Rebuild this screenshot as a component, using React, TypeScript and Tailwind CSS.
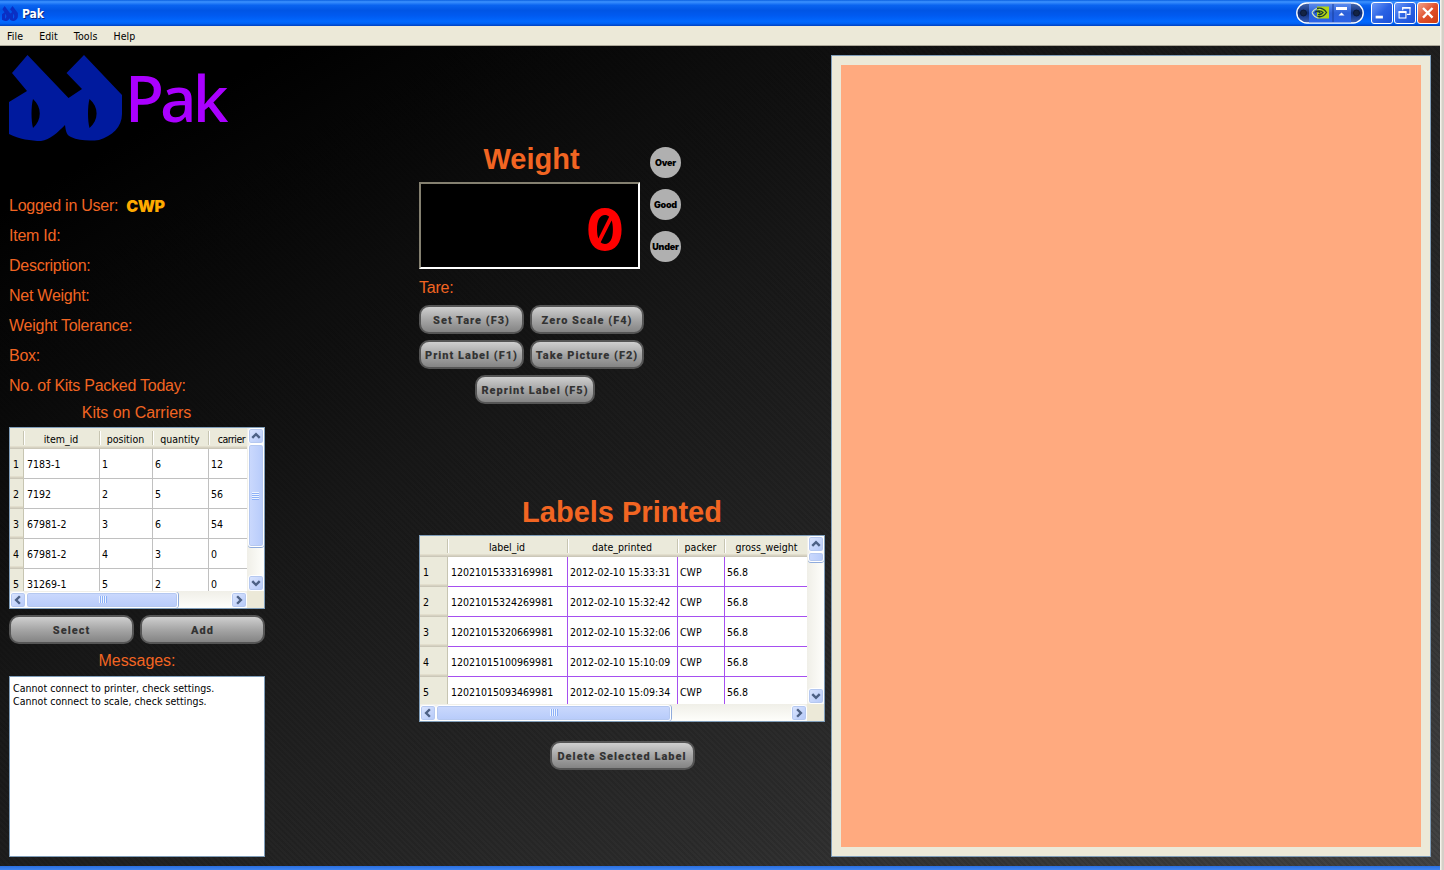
import React from "react";

const TAHOMA = "font-['DejaVu_Sans_Condensed','DejaVu_Sans',sans-serif] text-[10.5px]";

function Chevron({ dir }: { dir: "up" | "down" | "left" | "right" }) {
  const d = {
    up: "M3.5 9.5 L7.5 5.5 L11.5 9.5",
    down: "M3.5 5.5 L7.5 9.5 L11.5 5.5",
    left: "M9.5 3.5 L5.5 7.5 L9.5 11.5",
    right: "M5.5 3.5 L9.5 7.5 L5.5 11.5",
  }[dir];
  return (
    <div className="size-4 shrink-0 rounded-[3px] border border-white bg-linear-to-br from-[#dce6fe] to-[#b4c8f8] shadow-[inset_0_0_0_1px_#b5c8f0]">
      <svg viewBox="0 0 15 15" className="size-[14px]" fill="none" stroke="#4d6185" strokeWidth="2.6">
        <path d={d} />
      </svg>
    </div>
  );
}

function VScroll({ thumb, grip }: { thumb: string; grip?: boolean }) {
  return (
    <div className="flex w-[17px] shrink-0 flex-col bg-linear-to-r from-[#f0efe8] to-[#fefefb] pl-[0.5px]">
      <Chevron dir="up" />
      <div className="flex min-h-0 flex-1 flex-col">
        <div className={`${thumb} flex w-4 flex-col items-center justify-center gap-px rounded-[3px] border border-white bg-linear-to-r from-[#cbd9fd] to-[#b7cbfa] shadow-[inset_0_0_0_1px_#b5c8f0,0_1px_0_#8fabdc]`}>
          {grip && [0, 1, 2, 3].map((i) => <div key={i} className="h-px w-[7px] border-t border-[#eef4fe] shadow-[0_1px_0_#8cb0f8]" />)}
        </div>
      </div>
      <Chevron dir="down" />
    </div>
  );
}

function HScroll({ thumb }: { thumb: string }) {
  return (
    <div className="flex h-[17px] shrink-0 bg-linear-to-b from-[#f0efe8] to-[#fefefb] pt-[0.5px]">
      <Chevron dir="left" />
      <div className="flex min-w-0 flex-1">
        <div className={`${thumb} flex h-4 items-center justify-center gap-px rounded-[3px] border border-white bg-linear-to-b from-[#cbd9fd] to-[#b7cbfa] shadow-[inset_0_0_0_1px_#b5c8f0,1px_0_0_#8fabdc]`}>
          {[0, 1, 2, 3].map((i) => (
            <div key={i} className="h-[7px] w-px bg-[#eef4fe] shadow-[1px_0_0_#8cb0f8]" />
          ))}
        </div>
      </div>
      <Chevron dir="right" />
    </div>
  );
}

type TableProps = {
  cols: { name: string; w: string; tracking?: string }[];
  rows: string[][];
  headW: string;
  headPad: string;
  line: string;
  size: string;
  vThumb: string;
  hThumb: string;
  grip?: boolean;
};

function DataTable({ cols, rows, headW, headPad, line, size, vThumb, hThumb, grip }: TableProps) {
  return (
    <div className={`${size} ${TAHOMA} flex flex-col border border-[#7f9db9] bg-white text-black`}>
      <div className="flex min-h-0 flex-1">
        <div className="flex min-w-0 flex-1 flex-col overflow-hidden">
          <div className="flex h-[21px] shrink-0 border-b border-[#cbc7b8] bg-[#ebeadb] shadow-[inset_0_-1px_0_#d6d2c2,inset_0_-2px_0_#e2decd]">
            <div className={`${headW} my-[3px] shrink-0 border-r border-[#c7c5b2]`} />
            {cols.map((c) => (
              <div key={c.name} className={`${c.w} ${c.tracking ?? ""} my-[3px] flex shrink-0 items-center justify-center border-r border-l border-r-[#c7c5b2] border-l-white pt-[2px] pr-[2px] leading-none whitespace-nowrap last:border-r-0`}>
                <span>{c.name}</span>
              </div>
            ))}
          </div>
          {rows.map((r, i) => (
            <div key={i} className="flex h-[30px] shrink-0">
              <div className={`${headW} ${headPad} flex shrink-0 items-center border-b border-[#cbc7b8] bg-[#ebeadb] pt-[2px] shadow-[inset_-1px_0_0_#c7c5b2,inset_0_-1px_0_#d6d2c2,inset_0_-2px_0_#e2decd]`}>{i + 1}</div>
              {r.map((v, j) => (
                <div key={j} className={`${cols[j].w} ${line} flex shrink-0 items-center border-r border-b pt-[2px] pl-[2px] whitespace-nowrap nth-2:pl-[3px]`}>
                  {v}
                </div>
              ))}
            </div>
          ))}
        </div>
        <VScroll thumb={vThumb} grip={grip} />
      </div>
      <div className="flex shrink-0">
        <div className="min-w-0 flex-1">
          <HScroll thumb={hThumb} />
        </div>
        <div className="w-[17px] bg-[#ece9d8]" />
      </div>
    </div>
  );
}

function Btn({ children, w }: { children: string; w: string }) {
  return (
    <button className={`${w} h-[29px] shrink-0 rounded-[10px] border-2 border-[#555] bg-linear-to-b from-[#cfcfcf] via-[#a6a6a6] to-[#848484] pt-[2px] font-['Roboto',sans-serif] text-[11px] leading-none font-black tracking-[1px] whitespace-nowrap text-[#333]`}>
      {children}
    </button>
  );
}

function Label({ children }: { children: React.ReactNode }) {
  return <div className="flex h-[30px] items-center">{children}</div>;
}

function Lamp({ children }: { children: string }) {
  return (
    <div className="flex size-[31px] items-center justify-center rounded-full bg-[#b0b0b0] font-['Inter',sans-serif] text-[9px] leading-none font-black text-black">
      {children}
    </div>
  );
}

function LogoMark({ className, fill }: { className: string; fill: string }) {
  return (
    <svg viewBox="0 0 114 86" className={className} fill={fill} fillRule="evenodd" preserveAspectRatio="none">
      <path d="M18.500 0 L3 18 L18 36 L0 47 V79 C10 84 22 86 32 86 C41 85 49 77 56 70 C57 78 58 80 62 82 C70 86 82 86 90 85 C103 81 113 72 113 59 V40 L75 0 L57.500 18 L73 34 L59.500 43 Z M24 44 C33 52 33 65 24 73 C22 66 22 51 24 44 Z M80.500 44 C90 52 90 65 80.500 73 C78.500 66 78.500 51 80.500 44 Z" />
    </svg>
  );
}

function TitleBar() {
  const box = "size-[22px] rounded-[3px] border border-white";
  return (
    <div className="flex h-[26px] shrink-0 items-center bg-[linear-gradient(to_bottom,#0a5fe0_0%,#3c92ff_7%,#0a64f0_20%,#0055e5_40%,#005af0_60%,#0168ff_82%,#0062f5_90%,#0040c0_100%)] pr-[1px]">
      <LogoMark className="ml-[2px] h-[15px] w-4" fill="#0a2fc4" />
      <span className="ml-[4px] flex-1 pt-px font-['DejaVu_Sans_Condensed','DejaVu_Sans',sans-serif] text-[12px] font-bold text-white [text-shadow:1px_1px_0_#0a2a80]">Pak</span>
      <svg viewBox="0 0 68 22" className="mr-[7px] h-[22px] w-[68px]">
        <defs>
          <linearGradient id="pill" x1="0" y1="0" x2="0" y2="1">
            <stop offset="0" stopColor="#5a8cf0" />
            <stop offset="0.5" stopColor="#2c60d8" />
            <stop offset="1" stopColor="#2a62e8" />
          </linearGradient>
          <linearGradient id="cap" x1="0" y1="0" x2="0" y2="1">
            <stop offset="0" stopColor="#4468b0" />
            <stop offset="0.5" stopColor="#0c2c78" />
            <stop offset="1" stopColor="#3a60b8" />
          </linearGradient>
        </defs>
        <rect x="0.8" y="1" width="66.400" height="20" rx="10" fill="url(#cap)" stroke="#fff" strokeWidth="1.400" />
        <rect x="13" y="1.600" width="42" height="18.800" fill="url(#pill)" />
        <path d="M37 2 V20" stroke="#173f9c" />
        <circle cx="7.500" cy="11" r="3" fill="#142444" stroke="#0a1838" />
        <circle cx="60.500" cy="11" r="3" fill="#142444" stroke="#0a1838" />
        <rect x="21" y="4.500" width="12" height="12" fill="#b0d414" />
        <path d="M16 10.500 C18.500 6.500 22 5.500 24.500 7.500" fill="none" stroke="#d8ecb0" strokeWidth="1.200" />
        <path d="M16 10.500 C17.500 14 20 16 23 15.500" fill="none" stroke="#d8ecb0" strokeWidth="1.200" />
        <path d="M21 6.500 C25 5.500 28.500 7.500 30.500 10.500 C28.500 13.500 25.500 15.500 21.500 14.500 M19 10.500 C20 8.500 25 8 27 10.500 C25.500 12.500 23.500 13 22 12.500 M21 9.500 C23 9.500 24 10.500 24 11.500" fill="none" stroke="#1c3c30" strokeWidth="1.300" />
        <rect x="40" y="5" width="11" height="3" fill="#fff" />
        <path d="M42.500 13.500 L45.500 10.500 L48.500 13.500 Z" fill="#fff" />
      </svg>
      <div className="flex gap-px">
        <svg viewBox="0 0 22 22" className={`${box} bg-linear-to-br from-[#6c98f8] via-[#2a62e4] to-[#1a4fd8]`}>
          <rect x="4" y="14" width="8" height="3" fill="#fff" />
        </svg>
        <svg viewBox="0 0 22 22" className={`${box} bg-linear-to-br from-[#6c98f8] via-[#2a62e4] to-[#1a4fd8]`} fill="none" stroke="#fff">
          <path d="M8.500 8 V5 H16.500 V12.500 H13" strokeWidth="1.200" />
          <path d="M8 5.500 H17" strokeWidth="1.800" />
          <rect x="4.500" y="9.500" width="7.500" height="7" strokeWidth="1.200" />
          <path d="M4 10 H12.500" strokeWidth="1.800" />
        </svg>
        <svg viewBox="0 0 22 22" className={`${box} bg-linear-to-br from-[#f0a088] via-[#e0502c] to-[#d03c10]`} fill="none" stroke="#fff" strokeWidth="2.600">
          <path d="M5.500 5.500 L16 16 M16 5.500 L5.500 16" />
        </svg>
      </div>
    </div>
  );
}

const kits = [
  ["7183-1", "1", "6", "12"],
  ["7192", "2", "5", "56"],
  ["67981-2", "3", "6", "54"],
  ["67981-2", "4", "3", "0"],
  ["31269-1", "5", "2", "0"],
];

const printed = [
  ["12021015333169981", "2012-02-10 15:33:31", "CWP", "56.8"],
  ["12021015324269981", "2012-02-10 15:32:42", "CWP", "56.8"],
  ["12021015320669981", "2012-02-10 15:32:06", "CWP", "56.8"],
  ["12021015100969981", "2012-02-10 15:10:09", "CWP", "56.8"],
  ["12021015093469981", "2012-02-10 15:09:34", "CWP", "56.8"],
];

export default function App() {
  return (
    <div className="flex h-[870px] w-[1444px] overflow-hidden bg-[#d4d0c8]">
      <div className="flex w-[1440px] shrink-0 flex-col">
        <TitleBar />
        <div className={`${TAHOMA} flex h-5 shrink-0 items-center gap-4 border-b border-[#aca899] bg-[#ece9d8] pt-[2px] pl-[7px] tracking-[0.1px] text-black`}>
          <span>File</span>
          <span>Edit</span>
          <span>Tools</span>
          <span>Help</span>
        </div>
        <main className="flex h-[820px] shrink-0 bg-[repeating-linear-gradient(45deg,rgba(0,0,0,0.1)_0px,rgba(0,0,0,0.1)_2px,transparent_2px,transparent_4px),linear-gradient(150deg,#000_10%,#1a1a1a_42%,#2d2d2d_72%,#444_100%)] font-['Liberation_Sans',Arial,sans-serif] text-[16px] tracking-[-0.25px] text-[#f26522]">
          <section className="ml-[9px] flex w-[256px] shrink-0 flex-col pt-[9px]">
            <div className="flex h-[86px] shrink-0">
              <LogoMark className="h-[86px] w-[114px]" fill="#001a9e" />
              <span className="pt-[11px] pl-[2px] font-['Noto_Sans','Open_Sans',sans-serif] text-[64px] leading-[64px] font-medium tracking-[-4px] text-[#aa00ff]">Pak</span>
            </div>
            <div className="mt-[50px]">
              <Label>
                Logged in User:
                <span className="ml-2 font-['Inter',sans-serif] text-[16px] font-black tracking-[-0.5px] text-[#ffaa00]">CWP</span>
              </Label>
              <Label>Item Id:</Label>
              <Label>Description:</Label>
              <Label>Net Weight:</Label>
              <Label>Weight Tolerance:</Label>
              <Label>Box:</Label>
              <Label>No. of Kits Packed Today:</Label>
            </div>
            <div className="flex h-[26px] items-center justify-center pr-px pb-[2px] tracking-[-0.05px]">Kits on Carriers</div>
            <div className="tracking-normal">
              <DataTable
                cols={[
                  { name: "item_id", w: "w-[76px]" },
                  { name: "position", w: "w-[53px]" },
                  { name: "quantity", w: "w-[56px]" },
                  { name: "carrier", w: "w-[46px]", tracking: "tracking-[-0.5px]" },
                ]}
                rows={kits}
                headW="w-[14px]"
                headPad="pl-[3px]"
                line="border-[#c0c0c0]"
                size="h-[182px] w-[256px]"
                vThumb="h-[103px]"
                hThumb="w-[152px]"
                grip
              />
            </div>
            <div className="mt-[6px] flex justify-between">
              <Btn w="w-[125px]">Select</Btn>
              <Btn w="w-[125px]">Add</Btn>
            </div>
            <div className="flex h-8 items-center justify-center pt-[2px] tracking-[-0.05px]">Messages:</div>
            <div className={`${TAHOMA} h-[181px] border border-[#7f9db9] bg-white px-[3px] pt-[5px] leading-[13px] tracking-[0.05px] text-black`}>
              <p>Cannot connect to printer, check settings.</p>
              <p>Cannot connect to scale, check settings.</p>
            </div>
          </section>

          <section className="ml-[154px] flex w-[406px] shrink-0 flex-col pt-[95px]">
            <div className="flex gap-[6px]">
              <div className="w-[225px]">
                <h1 className="flex h-[41px] items-center justify-center pb-[4px] text-[29px] font-bold tracking-normal">Weight</h1>
                <div className="flex h-[87px] w-[221px] items-center justify-end border-2 border-t-[#848070] border-r-white border-b-white border-l-[#848070] bg-black pt-2 pr-[14px] font-['Inter',sans-serif] text-[57px] leading-none font-bold text-[#f00] [font-feature-settings:'zero']">0</div>
              </div>
              <div className="flex flex-col gap-[11px] pt-[6px]">
                <Lamp>Over</Lamp>
                <Lamp>Good</Lamp>
                <Lamp>Under</Lamp>
              </div>
            </div>
            <div className="flex h-9 items-center pt-[2px]">Tare:</div>
            <div className="flex w-[232px] flex-wrap gap-[6px]">
              <Btn w="w-[105px]">Set Tare (F3)</Btn>
              <Btn w="w-[114px]">Zero Scale (F4)</Btn>
              <Btn w="w-[105px]">Print Label (F1)</Btn>
              <Btn w="w-[114px]">Take Picture (F2)</Btn>
              <div className="pl-14">
                <Btn w="w-[120px]">Reprint Label (F5)</Btn>
              </div>
            </div>
            <h1 className="mt-[90px] flex h-[41px] items-center justify-center pb-[4px] text-[29px] font-bold tracking-normal">Labels Printed</h1>
            <div className="tracking-normal">
              <DataTable
                cols={[
                  { name: "label_id", w: "w-[120px]" },
                  { name: "date_printed", w: "w-[110px]" },
                  { name: "packer", w: "w-[47px]" },
                  { name: "gross_weight", w: "w-[84px]" },
                ]}
                rows={printed}
                headW="w-[28px]"
                headPad="pl-[3px]"
                line="border-[#a64ff0]"
                size="h-[187px] w-[406px]"
                vThumb="h-[10px]"
                hThumb="w-[235px]"
              />
            </div>
            <div className="mt-[19px] flex justify-center">
              <Btn w="w-[145px]">Delete Selected Label</Btn>
            </div>
          </section>

          <section className="mt-[9px] ml-[6px] h-[802px] w-[600px] shrink-0 border border-[#7f9db9] bg-[#ece9d8] p-[9px]">
            <div className="h-full bg-[#ffaa7f]" />
          </section>
        </main>
        <div className="h-1 bg-linear-to-b from-[#2a6fe0] to-[#3f85f0]" />
      </div>
      <div className="w-px bg-[#f4f2ec]" />
      <div className="w-px bg-[#e4e1d6]" />
    </div>
  );
}
